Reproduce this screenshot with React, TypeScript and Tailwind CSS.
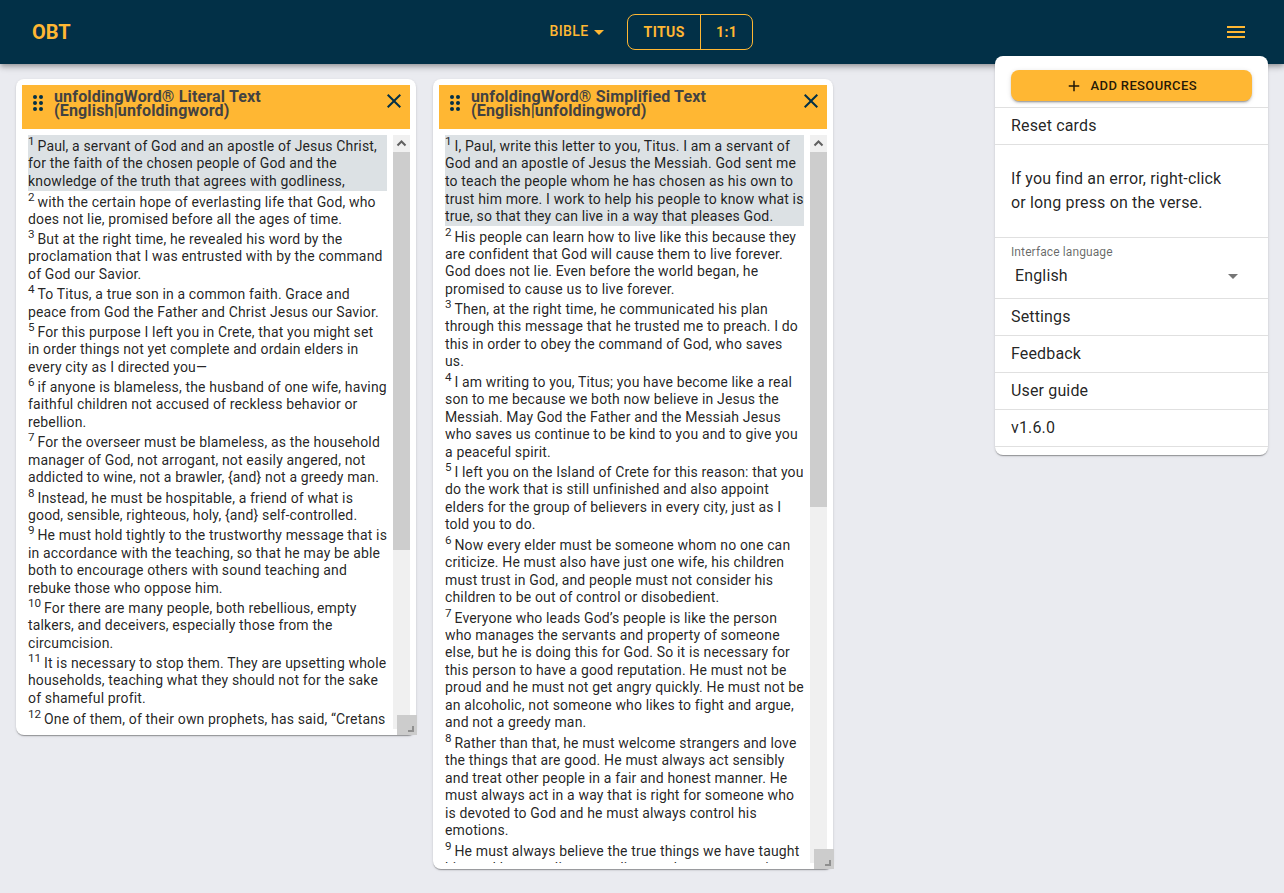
type Verse = [number, string];

const literal: Verse[] = [
  [1, 'Paul, a servant of God and an apostle of Jesus Christ, for the faith of the chosen people of God and the knowledge of the truth that agrees with godliness,'],
  [2, 'with the certain hope of everlasting life that God, who does not lie, promised before all the ages of time.'],
  [3, 'But at the right time, he revealed his word by the proclamation that I was entrusted with by the command of God our Savior.'],
  [4, 'To Titus, a true son in a common faith. Grace and peace from God the Father and Christ Jesus our Savior.'],
  [5, 'For this purpose I left you in Crete, that you might set in order things not yet complete and ordain elders in every city as I directed you—'],
  [6, 'if anyone is blameless, the husband of one wife, having faithful children not accused of reckless behavior or rebellion.'],
  [7, 'For the overseer must be blameless, as the household manager of God, not arrogant, not easily angered, not addicted to wine, not a brawler, {and} not a greedy man.'],
  [8, 'Instead, he must be hospitable, a friend of what is good, sensible, righteous, holy, {and} self-controlled.'],
  [9, 'He must hold tightly to the trustworthy message that is in accordance with the teaching, so that he may be able both to encourage others with sound teaching and rebuke those who oppose him.'],
  [10, 'For there are many people, both rebellious, empty talkers, and deceivers, especially those from the circumcision.'],
  [11, 'It is necessary to stop them. They are upsetting whole households, teaching what they should not for the sake of shameful profit.'],
  [12, 'One of them, of their own prophets, has said, “Cretans'],
];

const simplified: Verse[] = [
  [1, 'I, Paul, write this letter to you, Titus. I am a servant of God and an apostle of Jesus the Messiah. God sent me to teach the people whom he has chosen as his own to trust him more. I work to help his people to know what is true, so that they can live in a way that pleases God.'],
  [2, 'His people can learn how to live like this because they are confident that God will cause them to live forever. God does not lie. Even before the world began, he promised to cause us to live forever.'],
  [3, 'Then, at the right time, he communicated his plan through this message that he trusted me to preach. I do this in order to obey the command of God, who saves us.'],
  [4, 'I am writing to you, Titus; you have become like a real son to me because we both now believe in Jesus the Messiah. May God the Father and the Messiah Jesus who saves us continue to be kind to you and to give you a peaceful spirit.'],
  [5, 'I left you on the Island of Crete for this reason: that you do the work that is still unfinished and also appoint elders for the group of believers in every city, just as I told you to do.'],
  [6, 'Now every elder must be someone whom no one can criticize. He must also have just one wife, his children must trust in God, and people must not consider his children to be out of control or disobedient.'],
  [7, 'Everyone who leads God’s people is like the person who manages the servants and property of someone else, but he is doing this for God. So it is necessary for this person to have a good reputation. He must not be proud and he must not get angry quickly. He must not be an alcoholic, not someone who likes to fight and argue, and not a greedy man.'],
  [8, 'Rather than that, he must welcome strangers and love the things that are good. He must always act sensibly and treat other people in a fair and honest manner. He must always act in a way that is right for someone who is devoted to God and he must always control his emotions.'],
  [9, 'He must always believe the true things we have taught him and he must live according to what we are saying'],
];

function Card({ title, verses, height, thumb }: { title: string; verses: Verse[]; height: string; thumb: string }) {
  return (
    <section className={`relative flex w-[400px] flex-col rounded-lg bg-white p-1.5 shadow-[0_2px_1px_-1px_rgba(0,0,0,0.2),0_1px_1px_0_rgba(0,0,0,0.14),0_1px_3px_0_rgba(0,0,0,0.12)] ${height}`}>
      <header className="flex h-11 shrink-0 bg-[#ffb733] pl-2 pr-2">
        <svg className="mt-1.5 h-6 w-4 shrink-0" viewBox="0 0 16 24" fill="#023047">
          {[6, 12, 18].map((y) => (
            <g key={y}>
              <circle cx="5" cy={y} r="2" />
              <circle cx="11" cy={y} r="2" />
            </g>
          ))}
        </svg>
        <h2 className="ml-2 mt-[5px] flex-1 whitespace-pre-line text-base font-bold leading-[14px] tracking-[0.16px] text-[#424242]">{title}</h2>
        <svg className="mt-1 -mr-1 h-6 w-6 shrink-0" viewBox="0 0 24 24" fill="#023047">
          <path d="M19 6.41 17.59 5 12 10.59 6.41 5 5 6.41 10.59 12 5 17.59 6.41 19 12 13.41 17.59 19 19 17.59 13.41 12z" />
        </svg>
      </header>
      <div className="mt-1.5 flex min-h-0 flex-1 overflow-hidden pl-1.5">
        <div className="w-[359px] shrink-0 pt-[0.3px] text-sm leading-[17.52px] tracking-[0.15px] text-black/87">
          {verses.map(([n, text]) => (
            <p key={n} className={n === 1 ? 'bg-[#dce1e4]' : ''}>
              <sup className="static align-super text-[11.67px] leading-[12.85px] tracking-normal">{n} </sup>
              {text}
            </p>
          ))}
        </div>
        <div className="ml-1.5 w-[17px] bg-[#f0f0f0]">
          <svg className="block h-[17px] w-[17px]" viewBox="0 0 17 17" fill="none" stroke="#606060" strokeWidth="2">
            <path d="M4.5 10.5 8.5 6.5 12.5 10.5" />
          </svg>
          <div className={`bg-[#cdcdcd] ${thumb}`} />
        </div>
      </div>
      <div className="absolute -right-px bottom-0 h-5 w-5 bg-[#cccccc]">
        <div className="absolute bottom-[3px] right-[3px] h-1.5 w-1.5 border-b-2 border-r-2 border-[#8f8f8f]" />
      </div>
    </section>
  );
}

function MenuItem({ label }: { label: string }) {
  return <li className="flex h-[37px] items-center border-b border-black/12 px-4">{label}</li>;
}

export default function App() {
  return (
    <div className="relative h-[893px] w-full overflow-hidden bg-[#eaebf0] font-['Roboto',sans-serif] text-black/87">
      <nav className="relative flex h-16 items-center bg-[#023047] px-8 text-[#ffb733] shadow-[0_2px_4px_-1px_rgba(0,0,0,0.2),0_4px_5px_0_rgba(0,0,0,0.14),0_1px_10px_0_rgba(0,0,0,0.12)]">
        <div className="w-[517.5px] text-xl font-bold">OBT</div>
        <button className="flex items-center text-sm font-medium tracking-[0.4px]">
          <span className="pb-0.5">BIBLE</span>
          <svg className="-ml-[1.5px] h-6 w-6" viewBox="0 0 24 24" fill="currentColor">
            <path d="M7 10l5 5 5-5z" />
          </svg>
        </button>
        <div className="ml-4 flex h-9 rounded-lg border border-[#ffb733] text-sm font-bold tracking-[0.4px]">
          <button className="w-[73px] border-r border-[#ffb733]">TITUS</button>
          <button className="w-[51px]">1:1</button>
        </div>
        <svg className="ml-auto mr-1 h-6 w-6" viewBox="0 0 24 24" fill="currentColor">
          <path d="M3 18h18v-2H3v2zm0-5h18v-2H3v2zm0-7v2h18V6H3z" />
        </svg>
      </nav>
      <main className="flex items-start gap-[17px] px-4 pt-[15px]">
        <Card title={'unfoldingWord® Literal Text\n(English|unfoldingword)'} verses={literal} height="h-[656px]" thumb="h-[398px]" />
        <Card title={'unfoldingWord® Simplified Text\n(English|unfoldingword)'} verses={simplified} height="h-[790px]" thumb="h-[355px]" />
      </main>
      <aside className="absolute right-4 top-14 h-[399px] w-[273px] rounded-lg bg-white shadow-[0_2px_1px_-1px_rgba(0,0,0,0.2),0_1px_1px_0_rgba(0,0,0,0.14),0_1px_3px_0_rgba(0,0,0,0.12)]">
        <div className="h-[52px] border-b border-black/12 px-4 pt-3.5">
          <button className="flex h-[31px] w-full items-center justify-center rounded-lg bg-[#ffb733] pr-px text-[13px] font-medium tracking-[0.371px] shadow-[0_3px_1px_-2px_rgba(0,0,0,0.2),0_2px_2px_0_rgba(0,0,0,0.14),0_1px_5px_0_rgba(0,0,0,0.12)]">
            <svg className="mr-[7.5px] h-[18px] w-[18px]" viewBox="0 0 24 24" fill="currentColor">
              <path d="M19 13h-6v6h-2v-6H5v-2h6V5h2v6h6v2z" />
            </svg>
            ADD RESOURCES
          </button>
        </div>
        <ul className="text-base tracking-[0.15px]">
          <MenuItem label="Reset cards" />
          <li className="h-[93px] border-b border-black/12 px-4 pt-[22px] leading-6">
            If you find an error, right-click
            <br />
            or long press on the verse.
          </li>
          <li className="flex h-[61px] flex-col border-b border-black/12 px-4 pt-1.5">
            <span className="text-xs leading-4 tracking-[0.11px] text-black/60">Interface language</span>
            <div className="mt-1 flex items-center justify-between pl-1 pr-[7px] leading-6">
              English
              <svg className="h-6 w-6" viewBox="0 0 24 24" fill="#757575">
                <path d="M7 10l5 5 5-5z" />
              </svg>
            </div>
          </li>
          <MenuItem label="Settings" />
          <MenuItem label="Feedback" />
          <MenuItem label="User guide" />
          <MenuItem label="v1.6.0" />
        </ul>
      </aside>
    </div>
  );
}
